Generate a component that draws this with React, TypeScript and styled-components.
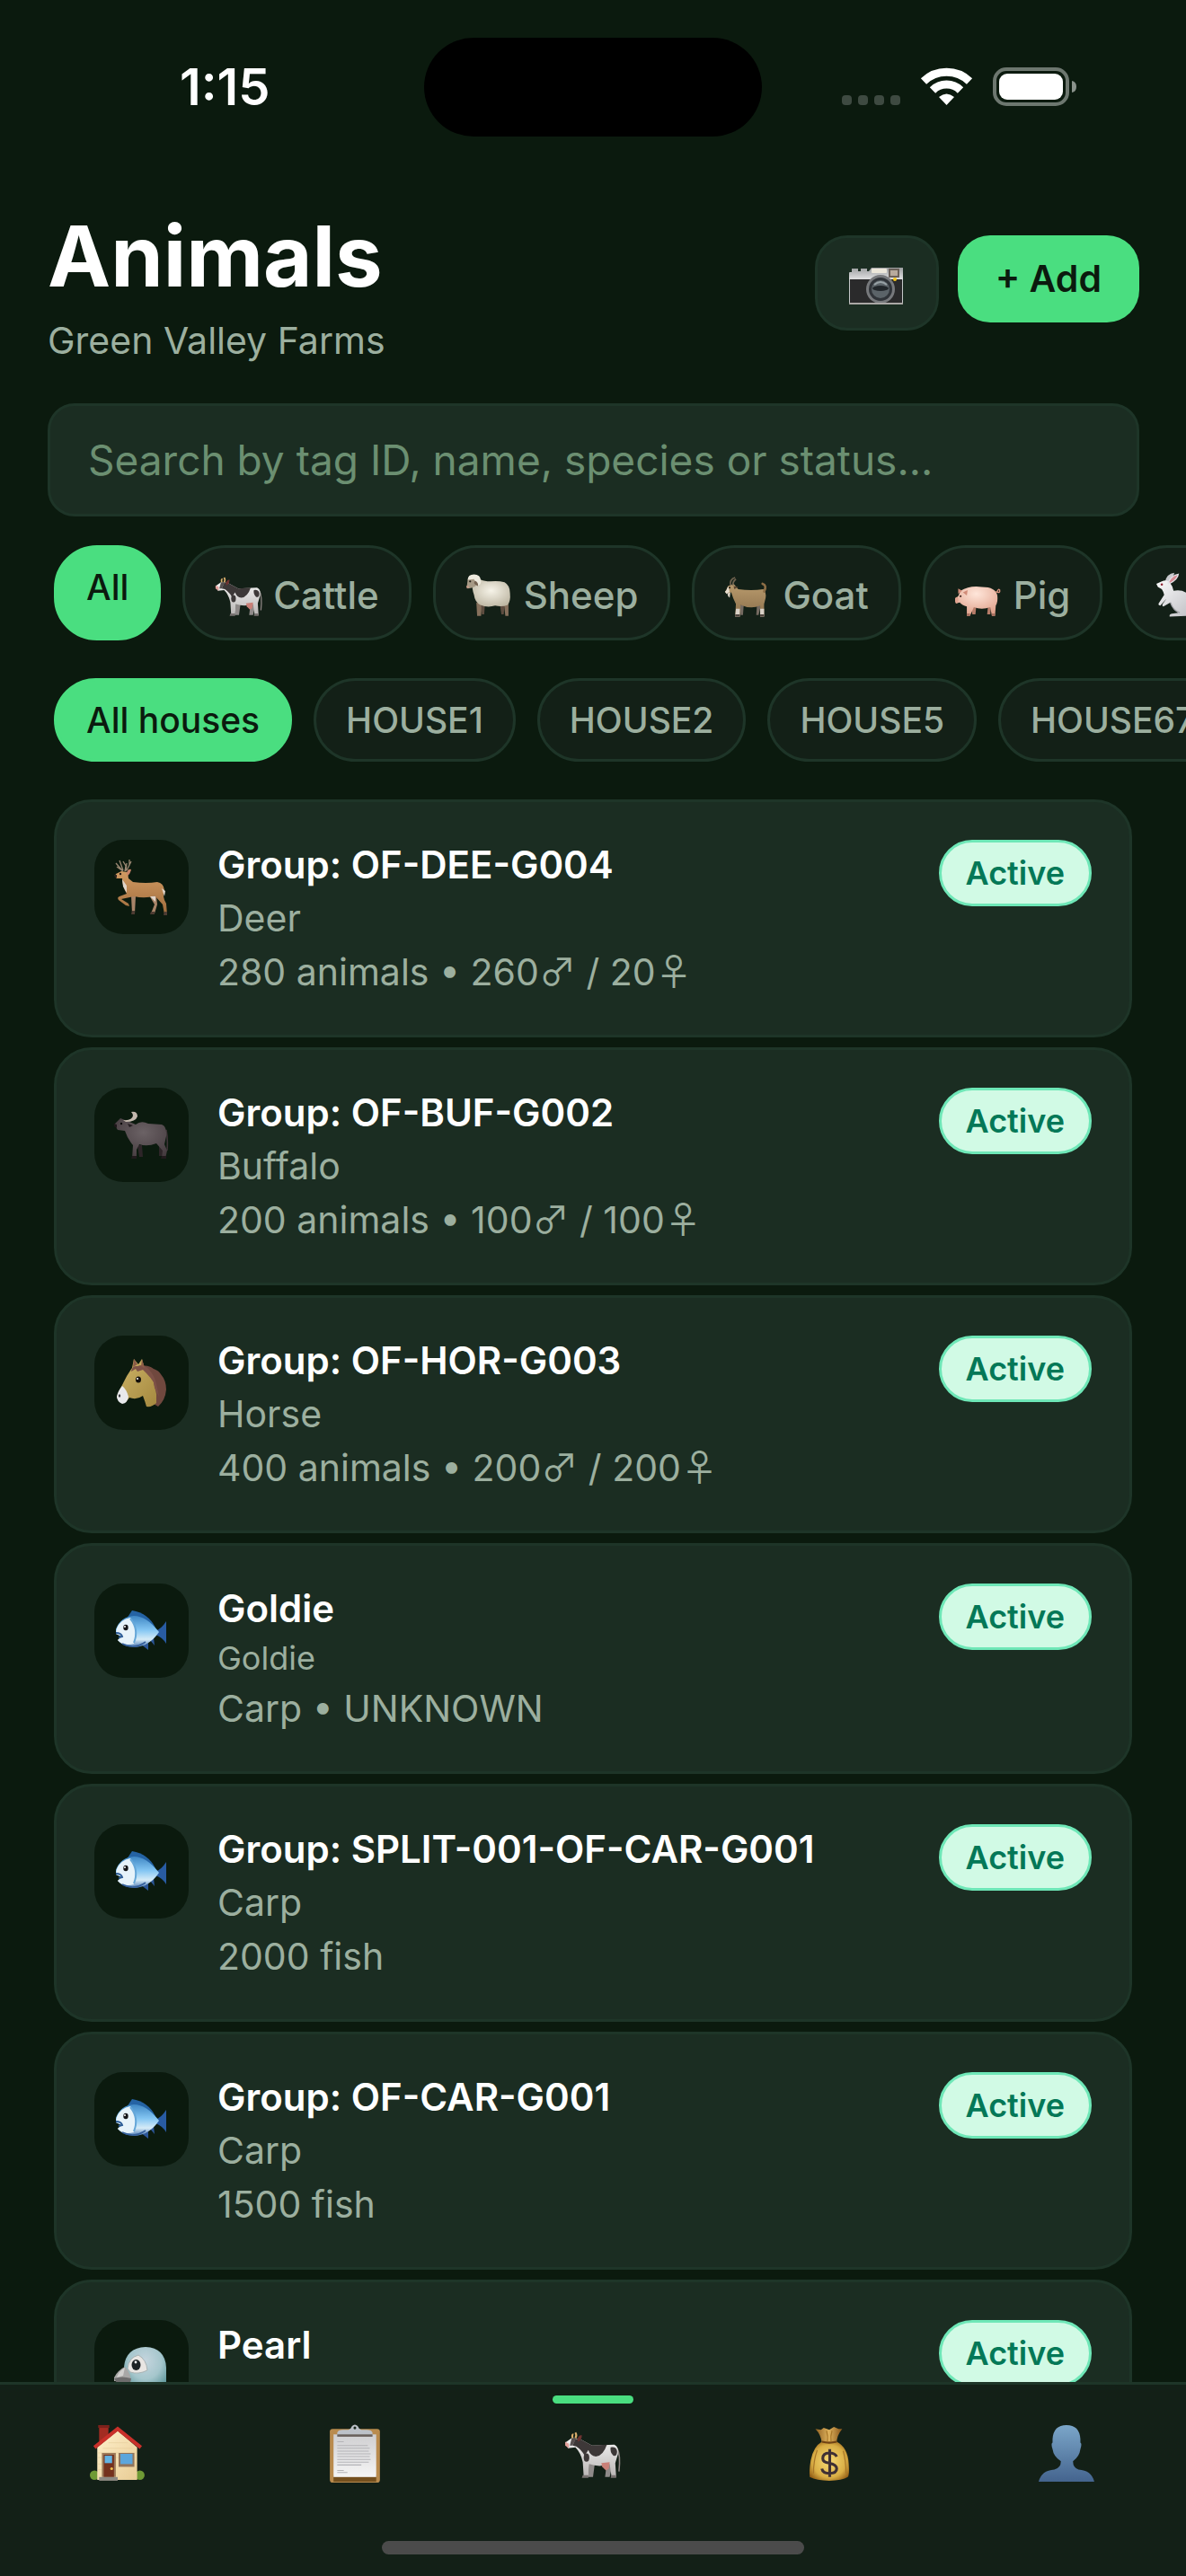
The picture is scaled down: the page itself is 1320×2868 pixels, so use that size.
import { useState } from 'react';
import type { ReactNode } from 'react';
import styled, { createGlobalStyle } from 'styled-components';

const GlobalStyle = createGlobalStyle`
  * {
    box-sizing: border-box;
  }

  body {
    margin: 0;
    background: #0b1a0e;
    font-family: Inter, 'Liberation Sans', sans-serif;
    color: #fff;
  }

  button, input {
    font-family: inherit;
  }
`;

const Screen = styled.div`
  height: 100vh;
  display: flex;
  flex-direction: column;
  overflow: hidden;
  background: #0b1a0e;
`;

const StatusBar = styled.div`
  flex-shrink: 0;
  height: 187px;
  padding: 42px 0 35px;
  display: grid;
  grid-template-columns: 1fr 376px 1fr;
  align-items: center;
`;

const Time = styled.time`
  padding-left: 200px;
  font-size: 56px;
  line-height: 64px;
  font-weight: 600;
`;

const Island = styled.div`
  height: 110px;
  border-radius: 55px;
  background: #000;
`;

const StatusIcons = styled.div`
  display: flex;
  justify-content: flex-end;
  padding-right: 121px;
`;

const Header = styled.header`
  flex-shrink: 0;
  display: flex;
  justify-content: space-between;
  align-items: center;
  padding: 36px 52px 42px 53px;
`;

const Title = styled.h1`
  margin: 0 0 4px;
  font-size: 94px;
  line-height: 125px;
  font-weight: 700;
`;

const Subtitle = styled.p`
  margin: 0;
  font-size: 41px;
  line-height: 55px;
  color: #9caf9f;
`;

const Actions = styled.div`
  display: flex;
  align-items: flex-start;
  gap: 21px;
`;

const CameraButton = styled.button`
  display: flex;
  align-items: center;
  height: 106px;
  padding: 0 35px;
  border: 3px solid #1e3528;
  border-radius: 36px;
  background: #1b2d22;
`;

const AddButton = styled.button`
  padding: 21px 42px;
  border: none;
  border-radius: 36px;
  background: #4ade80;
  color: #0b1a0e;
  font-size: 41px;
  line-height: 55px;
  font-weight: 600;
`;

const SearchBox = styled.div`
  flex-shrink: 0;
  display: flex;
  padding: 0 52px 32px 53px;
`;

const SearchInput = styled.input`
  flex: 1;
  min-width: 0;
  height: 126px;
  padding: 0 42px;
  border: 3px solid #1e3528;
  border-radius: 30px;
  background: #1b2d22;
  color: #fff;
  font-size: 46px;
  outline: none;

  &::placeholder {
    color: #6b8f71;
    opacity: 1;
  }
`;

const ChipRow = styled.div`
  flex-shrink: 0;
  display: flex;
  gap: 24px;
  padding: 0 60px;
  margin-bottom: 42px;
  overflow-x: auto;
  scrollbar-width: none;
`;

const Chip = styled.button<{ $active: boolean; $withIcon?: boolean }>`
  flex-shrink: 0;
  display: flex;
  align-items: ${({ $withIcon }) => ($withIcon ? 'flex-end' : 'flex-start')};
  gap: 11px;
  padding: ${({ $withIcon }) => ($withIcon ? '25px 33px 20px' : '16px 33px')};
  border: 3px solid ${({ $active }) => ($active ? '#4ade80' : '#1e3528')};
  border-radius: 48px;
  background: ${({ $active }) => ($active ? '#4ade80' : '#132017')};
  color: ${({ $active }) => ($active ? '#0b1a0e' : '#9caf9f')};
  font-size: ${({ $withIcon }) => ($withIcon ? 42 : 39)}px;
  line-height: 55px;
  font-weight: 500;
  white-space: nowrap;
`;

const List = styled.ul`
  flex: 1;
  min-height: 0;
  margin: 0;
  padding: 0 60px;
  list-style: none;
  overflow: hidden;
`;

const Card = styled.li`
  display: flex;
  align-items: flex-start;
  gap: 32px;
  margin-bottom: 11px;
  padding: 42px;
  border: 3px solid #1e3528;
  border-radius: 42px;
  background: #1b2d22;
`;

const Avatar = styled.div`
  flex-shrink: 0;
  display: flex;
  align-items: center;
  justify-content: center;
  width: 105px;
  height: 105px;
  border-radius: 32px;
  background: #0b1a0e;
`;

const CardBody = styled.div`
  flex: 1;
  min-width: 0;
  display: flex;
  flex-direction: column;
  gap: 5px;
`;

const CardTitle = styled.h2`
  margin: 0;
  font-size: 42px;
  line-height: 55px;
  font-weight: 600;
`;

const CardText = styled.p<{ $small?: boolean }>`
  margin: 0;
  font-size: ${({ $small }) => ($small ? 36 : 41)}px;
  line-height: ${({ $small }) => ($small ? 47 : 55)}px;
  color: #9caf9f;
`;

const Sex = styled.span`
  font-family: 'Noto Sans CJK JP', sans-serif;
  line-height: 1;
`;

const Badge = styled.span`
  flex-shrink: 0;
  padding: 10px 27px;
  border: 3px solid #6ee7b7;
  border-radius: 37px;
  background: #d1fae5;
  color: #047857;
  font-size: 36px;
  line-height: 48px;
  font-weight: 600;
`;

const TabBar = styled.nav`
  flex-shrink: 0;
  border-top: 3px solid #1e3528;
  background: #132017;
`;

const Tabs = styled.div`
  display: grid;
  grid-template-columns: repeat(5, 1fr);
`;

const Tab = styled.button<{ $active: boolean }>`
  display: flex;
  flex-direction: column;
  align-items: center;
  gap: 24px;
  padding: 12px 0 65px;
  border: none;
  background: none;

  &::before {
    content: '';
    width: 90px;
    height: 9px;
    border-radius: 5px;
    background: ${({ $active }) => ($active ? '#4ade80' : 'transparent')};
  }
`;

const HomeIndicator = styled.div`
  width: 470px;
  height: 15px;
  margin: 0 auto 24px;
  border-radius: 8px;
  background: #4b4b4b;
`;

const art: Record<string, ReactNode> = {
  cow: (
    <>
      <defs>
        <linearGradient id="cowBody" x1="0" y1="0" x2="0" y2="1">
          <stop offset="0" stopColor="#f4f4f4" />
          <stop offset="1" stopColor="#b9b5b4" />
        </linearGradient>
      </defs>
      <path d="M27 40 L26 56 H31 L33 41Z M46 40 L44 56 H49 L52 42Z" fill="#8f8a89" />
      <path d="M57 25 Q61 32 59 50" stroke="#8c8482" strokeWidth="1.5" fill="none" />
      <path d="M17 15 L30 22 L54 21 Q59 23 58 31 L55 41 L56 56 H51 L49 42 Q38 46 27 42 L26 56 H21 L20 40 Q18 30 12 24 L4 25 L1 19 L8 14Z" fill="url(#cowBody)" />
      <path d="M17 15 L30 22 L46 21 Q42 33 34 34 Q28 33 26 27 L22 33 Q19 27 13 23 L9 22 L12 15Z" fill="#3d3838" />
      <path d="M50 24 Q56 23 57 28 Q57 34 53 33 Q49 29 50 24Z" fill="#3d3838" />
      <ellipse cx="24" cy="35" rx="3" ry="4.500" fill="#3d3838" />
      <path d="M8 14 L13 14 L9 22 L6 22Z" fill="#575050" />
      <path d="M9 14 Q8 10 10 10 M12 14 Q14 11 12 8" stroke="#d9ad6c" strokeWidth="2" fill="none" />
      <path d="M14 15 Q16 10 19 11 Q19 16 15 18Z" fill="#6e3331" />
      <path d="M1 18 L5 20 L5 25 L1 22Z" fill="#e2a09b" />
      <path d="M40 41 L49 40 L48 47 L45 49 L41 45Z" fill="#c98078" />
      <path d="M20 54 H26 V57 H19Z M51 54 H56 V57 H50Z" fill="#777170" />
    </>
  ),
  sheep: (
    <>
      <defs>
        <radialGradient id="wool" cx=".5" cy=".4" r=".65">
          <stop offset="0" stopColor="#f6f3e8" />
          <stop offset="1" stopColor="#bdb6a2" />
        </radialGradient>
      </defs>
      <path d="M14 40 L15 57 H20 L21 42Z M49 40 L51 57 H55 L55 40Z" fill="#86705c" />
      <path d="M20 42 L21 55 H24 L25 42Z M44 42 L46 55 H49 L50 42Z" fill="#5e4d40" />
      <path d="M20 11 Q24 13 32 13 Q42 12 50 14 Q57 18 57 28 Q58 38 54 43 Q47 46 38 44 Q28 47 19 43 Q12 39 11 30 Q8 22 9 15Z" fill="url(#wool)" />
      <path d="M3 10 Q6 7 11 9 Q15 15 13 19 Q8 22 3 22 Q1 20 2 18Z" fill="#a79a86" />
      <path d="M3 11 Q3 4 11 4 Q19 4 20 12 Q20 18 15 18 Q12 14 11 10Z" fill="#eeeade" />
      <path d="M12 12 Q17 14 16 19 Q12 18 11 15Z" fill="#756352" />
      <circle cx="6" cy="13" r="1.300" fill="#262019" />
      <path d="M1 19 L4 18 L5 21 L2 22Z" fill="#c39b88" />
    </>
  ),
  goat: (
    <>
      <defs>
        <linearGradient id="goatBody" x1="0" y1="0" x2="0" y2="1">
          <stop offset="0" stopColor="#b99b6d" />
          <stop offset="1" stopColor="#8c704c" />
        </linearGradient>
      </defs>
      <path d="M20 43 L21 56 H24 L25 43Z M42 42 L41 56 H44 L47 43Z" fill="#746a61" />
      <path d="M12 16 L18 23 Q35 25 50 23 Q54 27 53 34 L51 42 L51 58 H46 L46 44 Q34 49 21 43 L20 58 H14 L15 42 Q11 34 9 27 L5 28 L1 27 L5 19Z" fill="url(#goatBody)" />
      <path d="M8 18 Q7 10 14 8 M11 18 Q11 13 15 10" stroke="#70634f" strokeWidth="2" fill="none" />
      <path d="M51 26 Q55 18 49 16" stroke="#8d6e46" strokeWidth="3" fill="none" strokeLinecap="round" />
      <path d="M5 19 L3 24 L1 26 L3 29 L7 26Z" fill="#e6ddcf" />
      <path d="M4 28 L8 27 L7 34 L5 32Z" fill="#d9d0c4" />
      <path d="M12 19 L18 20 L13 23Z" fill="#5b4631" />
      <circle cx="7" cy="21" r="1.200" fill="#211a14" />
      <path d="M15 48 H20 V58 H14Z M46 48 H51 V58 H46Z" fill="#d8d0c6" />
      <path d="M14 55 H20 V58 H14Z M46 55 H51 V58 H46Z" fill="#4e453e" />
    </>
  ),
  pig: (
    <>
      <defs>
        <radialGradient id="pigBody" cx=".5" cy=".25" r=".75">
          <stop offset="0" stopColor="#ffe6da" />
          <stop offset="1" stopColor="#dfa08a" />
        </radialGradient>
      </defs>
      <path d="M21 45 L22 55 H26 L27 45Z M42 45 L41 55 H45 L46 44Z" fill="#b67c69" />
      <path d="M52 26 Q58 29 57 24 Q55 22 54 26" stroke="#d7937e" strokeWidth="1.600" fill="none" />
      <path d="M7 25 Q18 18 34 20 Q52 20 54 31 Q55 39 52 44 L51 57 H47 L45 46 Q34 50 24 46 L19 57 H15 L15 45 Q9 44 6 40 L1 41 L0 35 L4 32Z" fill="url(#pigBody)" />
      <path d="M4 29 L4 22 L9 25Z M10 27 L16 24 L15 31Z" fill="#d18b78" />
      <ellipse cx="2" cy="37" rx="2" ry="4" fill="#e2a390" />
      <circle cx="7" cy="32" r="1.300" fill="#43261f" />
      <path d="M15 54 H19 V57 H15Z M47 54 H51 V57 H47Z" fill="#a87060" />
    </>
  ),
  rabbit: (
    <>
      <defs>
        <linearGradient id="rabbitBody" x1="0" y1="0" x2="1" y2="1">
          <stop offset="0" stopColor="#fafafa" />
          <stop offset="1" stopColor="#bdbdc2" />
        </linearGradient>
      </defs>
      <path d="M11 14 Q13 3 23 2 Q22 9 15 15Z" fill="#c9cacf" />
      <path d="M7 13 Q13 10 17 14 Q21 19 22 25 Q38 22 46 36 Q52 50 44 57 L17 58 Q16 54 22 54 L28 53 Q20 48 18 40 L9 45 Q7 45 8 42 L13 35 L5 44 Q2 44 3 41 L10 30 Q9 26 7 23 L2 20 L0 16Z" fill="url(#rabbitBody)" />
      <path d="M14 15 Q18 5 29 3 Q28 12 16 17Z" fill="#e4e4e8" />
      <path d="M17 13 Q20 7 27 5 Q25 11 17 15Z" fill="#d68d94" />
      <circle cx="7" cy="17" r="1.500" fill="#8e2433" />
      <path d="M18 40 Q22 51 30 53" stroke="#a4a4aa" strokeWidth="1.500" fill="none" />
    </>
  ),
  deer: (
    <>
      <defs>
        <linearGradient id="deerBody" x1="0" y1="0" x2="0" y2="1">
          <stop offset="0" stopColor="#d19a62" />
          <stop offset="1" stopColor="#a06c3c" />
        </linearGradient>
      </defs>
      <path d="M39 40 L45 50 L41 60 H45 L48 50 L47 40Z M19 40 L20 60 H23 L24 41Z" fill="#a88468" />
      <path d="M10 13 L3 8 M9 12 L2 4 M10 12 L6 1 M12 13 L13 7 L10 2 M14 12 L17 6 V0 M16 8 L19 2 M13 13 L14 4" stroke="#9b8873" strokeWidth="1.300" fill="none" />
      <path d="M2 16 L8 13 L15 14 L16 21 L21 25 Q36 27 48 25 Q55 26 56 34 Q53 41 58 49 L59 61 H56 L54 50 L45 40 Q36 44 22 41 L8 44 L16 49 L17 52 L13 51 L5 45 Q3 42 6 41 L14 38 Q9 30 9 21 L3 21 L1 19Z" fill="url(#deerBody)" />
      <path d="M14 15 Q15 10 19 11 Q18 16 15 18Z" fill="#c98368" />
      <path d="M9 22 L10 30 L14 37 L14 29Z M40 41 L46 41 L46 47Z M53 32 L57 35 L56 41Z" fill="#e1d5c9" />
      <path d="M0 17 L3 17 L3 20 L1 20Z" fill="#2e2420" />
      <circle cx="7" cy="16" r="1.200" fill="#251a15" />
      <path d="M20 57 H23 V61 H19Z M41 58 H45 V61 H40Z M56 58 H59 V62 H55Z" fill="#4e3c33" />
    </>
  ),
  buffalo: (
    <>
      <defs>
        <radialGradient id="buffaloBody" cx=".55" cy=".35" r=".7">
          <stop offset="0" stopColor="#6b6265" />
          <stop offset="1" stopColor="#443a3e" />
        </radialGradient>
      </defs>
      <path d="M26 42 L28 55 H32 L31 42Z M50 40 L50 54 H54 L55 40Z" fill="#2d2528" />
      <path d="M58 25 Q60 36 59 48" stroke="#3d3437" strokeWidth="1.600" fill="none" />
      <path d="M7 12 L17 16 L24 19 Q30 14 38 18 L53 19 Q59 21 58 32 L56 41 L59 48 L57 57 H53 L54 48 L47 40 Q37 44 28 41 L25 47 L25 57 H20 L21 42 Q15 35 12 26 L4 25 L0 19Z" fill="url(#buffaloBody)" />
      <path d="M10 14 Q20 15 21 9 Q21 7 19 5 Q26 4 26 10 Q24 16 13 16Z" fill="#c4b9ae" />
      <path d="M15 18 L21 20 L17 22Z" fill="#241d20" />
      <path d="M0 18 L3 19 L3 23 L0 21Z" fill="#1d1719" />
      <circle cx="8" cy="18" r="1.200" fill="#0d0a0b" />
      <path d="M53 54 H58 V57 H52Z M20 54 H25 V57 H19Z" fill="#211a1c" />
    </>
  ),
  horse: (
    <>
      <defs>
        <linearGradient id="horseFace" x1="0" y1="0" x2="1" y2="1">
          <stop offset="0" stopColor="#cdb468" />
          <stop offset="1" stopColor="#a5893f" />
        </linearGradient>
      </defs>
      <path d="M30 12 Q38 10 44 15 Q50 17 52 21 Q58 28 58 38 Q57 50 49 57 L44 54 L36 20Z" fill="#70483e" />
      <path d="M20 14 L22 4 L27 10 L31 4 L34 15 Q42 20 44 30 L47 43 L47 53 Q42 58 36 57 Q34 50 32 45 Q25 50 17 47 L13 52 Q5 53 3 46 Q5 40 9 33 Q14 22 20 14Z" fill="url(#horseFace)" />
      <path d="M9 34 Q14 38 16 46 Q15 53 9 54 Q3 51 3 46 Q4 40 9 34Z" fill="#e9e9ec" />
      <path d="M19 18 Q20 11 26 12 Q33 9 38 15 Q45 22 47 32 L50 46 L45 36 L44 30 Q40 24 36 20 L32 16 L26 18 L24 15Z" fill="#7d5147" />
      <path d="M21 13 L22 4 L26 10Z M30 12 L31 4 L34 14Z" fill="#8c5b47" />
      <ellipse cx="27" cy="27" rx="3" ry="3.600" fill="#14100c" />
      <circle cx="26" cy="26" r="1" fill="#fff" />
      <ellipse cx="6" cy="45" rx="1.200" ry="1.800" fill="#3c3c40" />
    </>
  ),
  fish: (
    <>
      <defs>
        <linearGradient id="fishBody" x1="0" y1="0" x2="0" y2="1">
          <stop offset="0" stopColor="#3f87c4" />
          <stop offset=".45" stopColor="#84c6f3" />
          <stop offset=".75" stopColor="#d6ebf7" />
          <stop offset="1" stopColor="#4878b4" />
        </linearGradient>
      </defs>
      <path d="M14 17 L20 8 Q38 11 46 27 L38 26Z" fill="#2563a4" />
      <path d="M46 31 Q53 28 58 20 V45 Q54 38 46 35Z" fill="#285ba2" />
      <path d="M29 45 L38 52 L38 44 Z M40 41 L45 47 L44 38Z" fill="#2b5596" />
      <path d="M2 29 Q7 15 22 14 Q36 14 50 32 Q39 48 23 49 Q9 48 4 41 L8 37 L2 34Z" fill="url(#fishBody)" />
      <path d="M3 28 Q7 18 18 16 Q27 26 22 45 Q10 48 4 41 L9 37 L2 34Z" fill="#e7f3fa" />
      <path d="M18 17 Q28 29 22 44" stroke="#65a6d7" strokeWidth="2" fill="none" />
      <path d="M2 33 Q8 33 9 37 L5 38" stroke="#2b5b96" strokeWidth="2" fill="none" />
      <ellipse cx="13" cy="27" rx="2.700" ry="3.200" fill="#151619" />
      <circle cx="12" cy="26" r="1" fill="#fff" />
      <path d="M9 45 Q22 52 35 43" stroke="#355f9b" strokeWidth="1.600" fill="none" />
    </>
  ),
  bird: (
    <>
      <defs>
        <radialGradient id="birdHead" cx=".5" cy=".3" r=".65">
          <stop offset="0" stopColor="#c5d5de" />
          <stop offset=".6" stopColor="#a5c6cc" />
          <stop offset="1" stopColor="#639a9e" />
        </radialGradient>
      </defs>
      <path d="M11 30 Q13 9 35 8 Q57 9 58 31 V60 H15 Q20 50 11 30Z" fill="url(#birdHead)" />
      <path d="M15 32 Q16 20 27 17 Q36 22 37 34 Q27 39 18 36Z" fill="#e9e6e3" stroke="#a9b3b3" strokeWidth="1" />
      <ellipse cx="24.500" cy="28" rx="5" ry="6" fill="#1c2224" />
      <circle cx="24" cy="25" r="1.400" fill="#fff" />
      <path d="M12 30 Q4 34 0 42 L0 46 L18 47 Q20 38 12 30Z" fill="#a8a7a6" />
      <path d="M0 43 Q9 40 19 43 L18 48 H3Z" fill="#6e6d6d" />
      <path d="M12 31 Q5 35 3 42 L10 40Z" fill="#d1d0ce" />
    </>
  ),
  camera: (
    <>
      <defs>
        <linearGradient id="camTop" x1="0" y1="0" x2="0" y2="1">
          <stop offset="0" stopColor="#9d9fa1" />
          <stop offset="1" stopColor="#dfe0e1" />
        </linearGradient>
      </defs>
      <rect x="0" y="19" width="60" height="36" rx="1" fill="#c5c7c9" />
      <rect x="1" y="26" width="58" height="27" fill="#2a2a2b" />
      <path d="M3 15 H10 V18 H13 V15 H20 V18 H22 L25 14 H60 V27 H0 V20 H3Z" fill="url(#camTop)" />
      <rect x="25" y="15" width="17" height="5" rx="1" fill="#ece7da" />
      <rect x="44" y="15" width="12" height="10" fill="#6a6059" />
      <rect x="46" y="17" width="8" height="6" fill="#b8aa9d" />
      <circle cx="35" cy="38" r="16" fill="#77797c" />
      <circle cx="35" cy="38" r="13" fill="#303439" />
      <circle cx="35" cy="38" r="10" fill="#5b6368" />
      <ellipse cx="35" cy="37" rx="9" ry="3" fill="#22272b" />
      <path d="M28 33 Q35 27 42 33" stroke="#98a2a6" strokeWidth="2" fill="none" />
      <circle cx="51" cy="27" r="2" fill="#f5c518" />
      <rect x="0" y="53" width="60" height="2" fill="#aaa7a5" />
    </>
  ),
  house: (
    <>
      <defs>
        <linearGradient id="houseWall" x1="0" y1="0" x2="1" y2="1">
          <stop offset="0" stopColor="#fff0cb" />
          <stop offset="1" stopColor="#e8cc95" />
        </linearGradient>
      </defs>
      <rect x="10" y="1" width="10" height="17" fill="#a32c22" />
      <rect x="9" y="0" width="12" height="3" fill="#7c211b" />
      <circle cx="5" cy="54" r="5" fill="#6f9a35" />
      <circle cx="54" cy="54" r="5" fill="#6f9a35" />
      <path d="M8 24 L30 6 L51 24 V59 H8Z" fill="url(#houseWall)" />
      <path d="M9 35 H50 M9 30 H50 M14 25 H46 M20 19 H41 M9 42 H13 M9 48 H13" stroke="#e5cd9c" strokeWidth=".6" />
      <path d="M5 24 L30 4 L55 24" stroke="#c9302a" strokeWidth="4" fill="none" />
      <rect x="13" y="30" width="15" height="26" fill="#9c7a5a" />
      <rect x="15" y="32" width="11" height="24" fill="#74311e" />
      <rect x="16" y="33" width="8" height="8" fill="#63b3e4" />
      <circle cx="23.500" cy="47" r="1.500" fill="#f0c04d" />
      <rect x="10" y="56" width="20" height="4" fill="#8d8983" />
      <rect x="31" y="30" width="17" height="15" fill="#91755c" />
      <rect x="33" y="31" width="13" height="11" fill="#5ca6dc" />
    </>
  ),
  clipboard: (
    <>
      <defs>
        <linearGradient id="paper" x1="0" y1="0" x2="0" y2="1">
          <stop offset="0" stopColor="#cfcfd1" />
          <stop offset="1" stopColor="#f5f5f5" />
        </linearGradient>
      </defs>
      <rect x="3" y="4" width="54" height="58" rx="3" fill="#b98b4e" />
      <rect x="7" y="54" width="46" height="7" fill="#74501f" />
      <rect x="7" y="10" width="46" height="46" fill="url(#paper)" />
      <path d="M11 18 H18 M11 22 H44 M11 25 H46 M11 28 H45 M11 31 H47 M11 34 H46 M11 37 H47 M11 40 H45 M11 43 H37 M11 49 H18 M11 51 H22" stroke="#b4b4b8" strokeWidth="1" />
      <path d="M11 12 V8 Q12 5 17 5 H23 Q26 4 27 1 Q30 -2 33 1 Q34 4 37 5 H43 Q48 5 49 8 V12Z" fill="#bcc1c8" />
      <rect x="11" y="10" width="38" height="2.500" fill="#6a625d" />
      <circle cx="30" cy="3" r="1.500" fill="#1d2a21" />
    </>
  ),
  money: (
    <>
      <defs>
        <radialGradient id="sack" cx=".5" cy=".5" r=".6">
          <stop offset="0" stopColor="#f7da74" />
          <stop offset=".7" stopColor="#d9ae45" />
          <stop offset="1" stopColor="#966117" />
        </radialGradient>
        <linearGradient id="sackNeck" x1="0" y1="0" x2="1" y2="0">
          <stop offset="0" stopColor="#8d5e20" />
          <stop offset=".5" stopColor="#e0b35d" />
          <stop offset="1" stopColor="#875319" />
        </linearGradient>
      </defs>
      <path d="M15 4 L21 5 L24 3 L30 5 L35 2 L40 4 L44 4 Q38 11 38 19 H22 Q21 10 15 4Z" fill="url(#sackNeck)" />
      <path d="M22 18 H38 Q50 24 51 42 Q52 54 50 56 Q44 60 30 60 Q16 60 9 56 Q8 50 10 38 Q13 23 22 18Z" fill="url(#sack)" />
      <path d="M22 18 Q30 20 38 18" stroke="#704315" strokeWidth="2" fill="none" />
      <path d="M27 6 Q29 12 28 18 M33 6 Q31 12 32 18 M17 27 Q13 38 13 52 M45 28 Q48 38 48 52" stroke="#a87729" strokeWidth="1.200" fill="none" />
      <path d="M38 34 Q36 30 30 30 Q23 30 23 36 Q23 40 30 41 Q38 43 38 47 Q38 52 30 52 Q23 52 22 47 M30.500 26 V56" stroke="#3f3034" strokeWidth="3" fill="none" />
    </>
  ),
  person: (
    <>
      <defs>
        <linearGradient id="person" x1="0" y1="0" x2="0" y2="1">
          <stop offset="0" stopColor="#7ba6c9" />
          <stop offset="1" stopColor="#44648e" />
        </linearGradient>
      </defs>
      <path d="M30 0 Q44 0 45 15 L45 19 Q47 20 45 26 Q44 34 37 39 Q37 46 43 48 Q57 49 60 61 H0 Q3 49 17 48 Q24 46 24 39 Q16 34 15 26 Q13 20 15 19 L15 15 Q16 0 30 0Z" fill="url(#person)" />
    </>
  ),
};

function Emoji({ name, size }: { name: string; size: number }) {
  return (
    <svg width={size} height={size} viewBox="0 0 62 62" overflow="visible" aria-hidden="true">
      {art[name]}
    </svg>
  );
}

const species = [
  { label: 'All', icon: '' },
  { label: 'Cattle', icon: 'cow' },
  { label: 'Sheep', icon: 'sheep' },
  { label: 'Goat', icon: 'goat' },
  { label: 'Pig', icon: 'pig' },
  { label: 'Rabbit', icon: 'rabbit' },
];

const houses = ['All houses', 'HOUSE1', 'HOUSE2', 'HOUSE5', 'HOUSE67'];

interface Animal {
  icon: string;
  title: string;
  name?: string;
  info: ReactNode[];
}

const sexes = (total: number, males: number, females: number) => (
  <>
    {total} animals • {males}<Sex>♂</Sex> / {females}<Sex>♀</Sex>
  </>
);

const animals: Animal[] = [
  { icon: 'deer', title: 'Group: OF-DEE-G004', info: ['Deer', sexes(280, 260, 20)] },
  { icon: 'buffalo', title: 'Group: OF-BUF-G002', info: ['Buffalo', sexes(200, 100, 100)] },
  { icon: 'horse', title: 'Group: OF-HOR-G003', info: ['Horse', sexes(400, 200, 200)] },
  { icon: 'fish', title: 'Goldie', name: 'Goldie', info: ['Carp • UNKNOWN'] },
  { icon: 'fish', title: 'Group: SPLIT-001-OF-CAR-G001', info: ['Carp', '2000 fish'] },
  { icon: 'fish', title: 'Group: OF-CAR-G001', info: ['Carp', '1500 fish'] },
  { icon: 'bird', title: 'Pearl', info: [] },
];

const tabs = [
  { icon: 'house', label: 'Home' },
  { icon: 'clipboard', label: 'Tasks' },
  { icon: 'cow', label: 'Animals' },
  { icon: 'money', label: 'Finance' },
  { icon: 'person', label: 'Profile' },
];

export default function App() {
  const [activeSpecies, setActiveSpecies] = useState('All');
  const [activeHouse, setActiveHouse] = useState('All houses');
  const [activeTab, setActiveTab] = useState('Animals');
  const [query, setQuery] = useState('');

  return (
    <Screen>
      <GlobalStyle />
      <StatusBar>
        <Time>1:15</Time>
        <Island />
        <StatusIcons>
          <svg width="262" height="44" viewBox="0 0 262 44" aria-hidden="true">
            <g fill="#3e4a41">
              <rect x="0" y="31" width="11" height="11" rx="4" />
              <rect x="18" y="31" width="11" height="11" rx="4" />
              <rect x="36" y="31" width="11" height="11" rx="4" />
              <rect x="54" y="31" width="11" height="11" rx="4" />
            </g>
            <g fill="none" stroke="#fff" strokeWidth="9">
              <path d="M91 15.500 A37 37 0 0 1 142 15.500" />
              <path d="M101 25.500 A22 22 0 0 1 132 25.500" />
            </g>
            <path d="M108 33 Q116.500 26 125 33 L116.500 42Z" fill="#fff" />
            <rect x="170" y="2" width="81" height="39" rx="13" fill="none" stroke="#6d776f" strokeWidth="4" />
            <rect x="175" y="7" width="71" height="29" rx="9" fill="#fff" />
            <path d="M256 15 Q261 16 261 21.500 Q261 27 256 28Z" fill="#8a928b" />
          </svg>
        </StatusIcons>
      </StatusBar>

      <Header>
        <div>
          <Title>Animals</Title>
          <Subtitle>Green Valley Farms</Subtitle>
        </div>
        <Actions>
          <CameraButton type="button" aria-label="Scan tag">
            <Emoji name="camera" size={62} />
          </CameraButton>
          <AddButton type="button">+ Add</AddButton>
        </Actions>
      </Header>

      <SearchBox>
        <SearchInput
          aria-label="Search animals"
          placeholder="Search by tag ID, name, species or status…"
          value={query}
          onChange={(e) => setQuery(e.target.value)}
        />
      </SearchBox>

      <ChipRow>
        {species.map(({ label, icon }) => (
          <Chip
            key={label}
            type="button"
            $active={label === activeSpecies}
            $withIcon={icon !== ''}
            onClick={() => setActiveSpecies(label)}
          >
            {icon && <Emoji name={icon} size={54} />}
            {label}
          </Chip>
        ))}
      </ChipRow>

      <ChipRow>
        {houses.map((house) => (
          <Chip
            key={house}
            type="button"
            $active={house === activeHouse}
            onClick={() => setActiveHouse(house)}
          >
            {house}
          </Chip>
        ))}
      </ChipRow>

      <List>
        {animals.map((animal) => (
          <Card key={animal.title}>
            <Avatar>
              <Emoji name={animal.icon} size={62} />
            </Avatar>
            <CardBody>
              <CardTitle>{animal.title}</CardTitle>
              {animal.name && <CardText $small>{animal.name}</CardText>}
              {animal.info.map((line, i) => (
                <CardText key={i}>{line}</CardText>
              ))}
            </CardBody>
            <Badge>Active</Badge>
          </Card>
        ))}
      </List>

      <TabBar>
        <Tabs>
          {tabs.map(({ icon, label }) => (
            <Tab
              key={label}
              type="button"
              aria-label={label}
              $active={label === activeTab}
              onClick={() => setActiveTab(label)}
            >
              <Emoji name={icon} size={64} />
            </Tab>
          ))}
        </Tabs>
        <HomeIndicator />
      </TabBar>
    </Screen>
  );
}
